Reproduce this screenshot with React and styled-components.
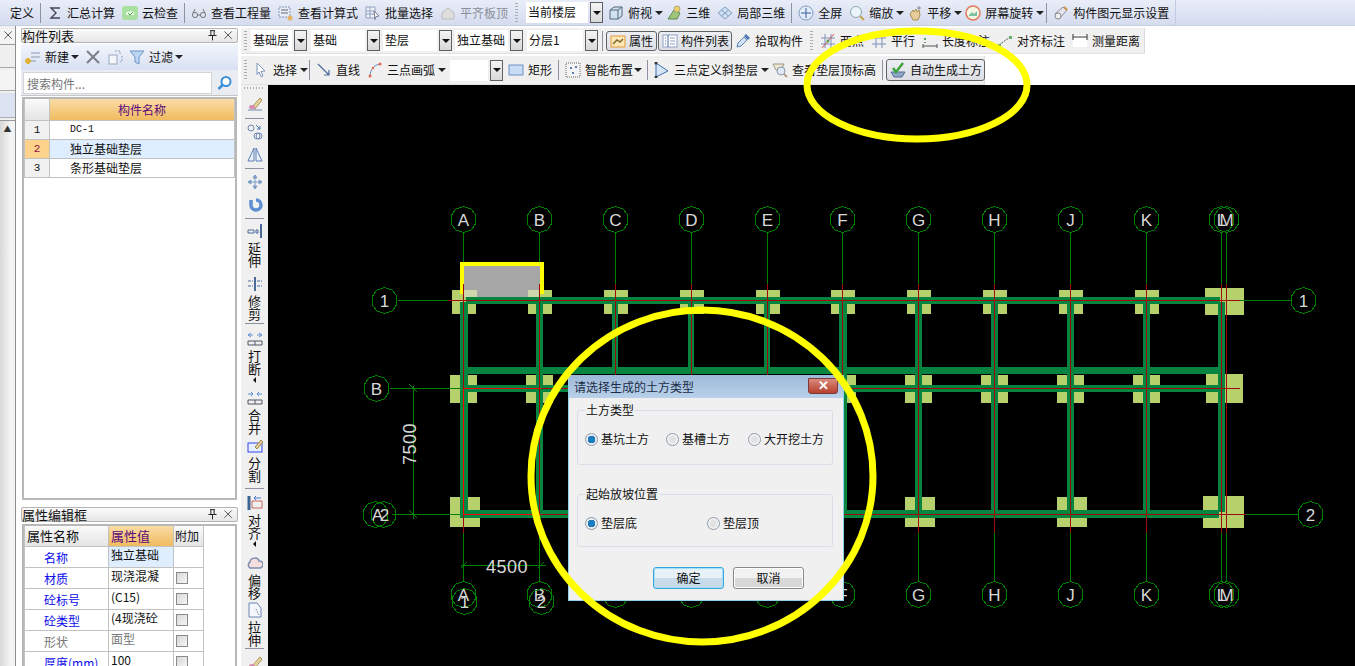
import React from 'react'
import styled, { createGlobalStyle, css } from 'styled-components'

const FONT = `"Noto Sans CJK SC", "Liberation Sans", sans-serif`

const GlobalStyle = createGlobalStyle`
  html, body { margin: 0; padding: 0; background: #fff; overflow: hidden; }
  body { font: 12px/16px ${FONT}; color: #111; }
`

/* ---------- small toolbar icons ---------- */

const G = { fill: 'none', stroke: '#6f86b4', strokeWidth: 1 }

const icons = {
  doc: <><rect x="-8" y="3" width="13" height="11" fill="#dfe7f5" stroke="#5a72a0" /><path d="M-5 6h7M-5 9h7" stroke="#5a72a0" /></>,
  sigma: <path d="M13 3H4l5 5-5 5h9" fill="none" stroke="#445" strokeWidth="1.4" />,
  cloud: <><rect x="0" y="1" width="16" height="14" rx="3" fill="#a9dfa0" /><path d="M4 9c0-3 3-3 4-2 2-2 5 0 4 3H5z" fill="#f4fff0" /><path d="M6 8l2 2 3-3" stroke="#4aa54a" fill="none" /></>,
  glasses: <><circle cx="4" cy="10" r="2.6" {...G} stroke="#777" /><circle cx="12" cy="10" r="2.6" {...G} stroke="#777" /><path d="M6.5 10h3M2 8l2-4M14 8l-2-4" stroke="#777" fill="none" /></>,
  sheet: <><path d="M1 2h11v10H1z" fill="#e8edf6" stroke="#7f93b8" strokeDasharray="2 1" /><path d="M3 5h7M3 8h7" stroke="#667" /><circle cx="12" cy="13" r="2.5" fill="#e5b565" /></>,
  batch: <><path d="M1 2h9v11H1z" fill="#eef1f8" stroke="#8fa0c0" /><path d="M1 6h9M1 9h9M5 2v11" stroke="#8fa0c0" /><path d="M9 6l5 5-3 .5-1 3z" fill="#fff" stroke="#778" /></>,
  house: <path d="M2 8l6-5 6 5v6H2z" fill="#ddd" stroke="#bbb" />,
  cube: <><path d="M2 5l4-3h8v9l-4 3H2z" fill="#cfe3f2" stroke="#567" /><path d="M2 5h8v9M10 5l4-3" fill="none" stroke="#567" /></>,
  threeD: <><path d="M2 14L8 5l6 3-3 6z" fill="#9dc67c" stroke="#5d8a4a" /><circle cx="11" cy="4" r="3" fill="#f0d060" stroke="#aa8" /></>,
  local: <><path d="M1 8l7-6 7 6-7 6z" fill="#cfe0f2" stroke="#7f9cc0" /><path d="M4.5 5l7 6M11.500 5l-7 6" stroke="#7f9cc0" /></>,
  fullscreen: <><circle cx="8" cy="8" r="7" fill="#e3ecf8" stroke="#7f9cc0" /><path d="M8 3v10M3 8h10" stroke="#35609a" /></>,
  zoom: <><circle cx="7" cy="7" r="5.500" fill="#eef4fb" stroke="#8aa" /><path d="M11 11l4 4" stroke="#c9a050" strokeWidth="2" /></>,
  hand: <><path d="M3 9l3-4 1 2 2-3 1 3 2-2 1 5-2 5H6z" fill="#e7cd9a" stroke="#a98d55" /><path d="M12 1v4M10 3h4" stroke="#889" /></>,
  rotate: <><circle cx="8" cy="8" r="7" fill="#f3f6e4" stroke="#e27a5a" strokeWidth="1.5" /><path d="M4 10l3-3 2 2 3-3v5H4z" fill="#7cc0a0" /></>,
  settings: <><path d="M2 9l8-7 4 3-7 8z" fill="#e3e6ee" stroke="#889" /><circle cx="5" cy="11" r="3" fill="#f0f0f0" stroke="#888" /><path d="M11 2l3 3" stroke="#d09040" strokeWidth="2" /></>,
  props: <><rect x="1" y="3" width="14" height="11" fill="#fde6b5" stroke="#e59a3a" /><path d="M3 11l4-4 3 2 3-3" stroke="#7a6a30" fill="none" strokeWidth="1.500" /></>,
  list: <><rect x="1" y="2" width="14" height="12" fill="#fff" stroke="#8ca0c4" /><path d="M6 2v12M3 5h1M3 8h1M3 11h1" stroke="#4a6aa0" /><path d="M8 5h5M8 8h5M8 11h5" stroke="#8ca0c4" /></>,
  dropper: <><path d="M2 14l1-4 6-6 3 3-6 6z" fill="#cfe4f7" stroke="#5a7fb0" /><path d="M9 3l2-2 4 4-2 2z" fill="#4a76b5" /></>,
  twoPoint: <><path d="M1 5h14M1 11h14M5 1v14M11 1v14" stroke="#7d93bb" fill="none" /><path d="M2 15L14 1" stroke="#d9534f" /><circle cx="8" cy="8" r="1.500" fill="#5a9a50" /></>,
  parallel: <path d="M1 5h14M1 11h14M5 1v14M11 1v14" stroke="#7d93bb" fill="none" />,
  dimLen: <><path d="M1 11v4M15 11v4M1 13h14" stroke="#555" fill="none" /><path d="M2 5h2v2H2zM2 9h2v1H2z" fill="#5aa55a" /></>,
  dimAlign: <><path d="M2 12L13 4" stroke="#555" strokeDasharray="2 1" fill="none" /><rect x="1" y="11" width="3" height="3" fill="#6ab06a" /><rect x="12" y="3" width="3" height="3" fill="#6ab06a" /></>,
  measure: <><rect x="1" y="2" width="14" height="12" fill="#fff" /><path d="M1 1v6M15 1v6M1 4h14" stroke="#333" fill="none" /></>,
  cursor: <path d="M4 1l8 8-4 .5 2 4.500-2 .5-2-4.500-2 2.500z" fill="#fff" stroke="#7d93bb" />,
  line: <path d="M2 2l11 11M13 8v5H8" stroke="#4a6a9a" fill="none" strokeWidth="1.200" />,
  arc: <><path d="M3 14C3 8 7 3 13 2" stroke="#6a86b4" fill="none" /><circle cx="3" cy="14" r="1.500" fill="#e06a50" /><circle cx="13" cy="2" r="1.500" fill="#e06a50" /><circle cx="6" cy="6" r="1.200" fill="#e06a50" /></>,
  rect: <rect x="1" y="3" width="14" height="10" fill="#c8dcf5" stroke="#6f8fc0" />,
  smart: <><rect x="1" y="1" width="14" height="14" fill="#f4f4f4" stroke="#666" strokeDasharray="1 1" /><path d="M5 5h2v2H5zM10 4h2v2h-2zM7 10h2v2H7z" fill="#5a7fb0" /></>,
  slope: <><path d="M2 1l12 8-12 6z" fill="#d7e6f7" stroke="#3d6cae" /><circle cx="2" cy="1" r="1.500" fill="#334" /><circle cx="2" cy="15" r="1.500" fill="#334" /></>,
  viewTop: <><path d="M1 2h11l-3 6H4z" fill="#f0e6cf" stroke="#998" /><circle cx="9" cy="9" r="4" fill="#dfeaf6" stroke="#89a" /><path d="M12 12l3 3" stroke="#b98" strokeWidth="2" /></>,
  autoSoil: <><path d="M1 10h14l-3 5H4z" fill="#8fa6c9" stroke="#5a6f96" /><path d="M3 6l3 4 7-9" stroke="#3ea53e" fill="none" strokeWidth="2.500" /></>,
  brush: <><path d="M1 14h14" stroke="#6f86b4" /><path d="M5 11L13 2l2 2-7 9z" fill="#e8d49a" stroke="#a8955a" /><ellipse cx="5" cy="11" rx="3" ry="2" fill="#d58bb0" /></>,
  offsetC: <><circle cx="4" cy="4" r="3" {...G} /><circle cx="10" cy="12" r="3" {...G} /><circle cx="12" cy="12" r="3" {...G} /><path d="M9 1l4 4M13 2v3h-3" stroke="#4a76b5" fill="none" /></>,
  mirror: <><path d="M7 2L1 15h6zM9 2l6 13H9z" fill="#e9f0fa" stroke="#5a7fb5" /></>,
  move: <path d="M8 1v14M1 8h14M8 1L6 4h4zM8 15l-2-3h4zM1 8l3-2v4zM15 8l-3-2v4z" fill="#7d9cc6" stroke="#7d9cc6" />,
  spin: <path d="M4 3v5a5 5 0 1 0 5-5" fill="none" stroke="#5f8fd0" strokeWidth="3.500" />,
  extend: <><path d="M1 7h6v3H1zM9 7h2v3H9z" fill="none" stroke="#4a6a9a" /><path d="M14 1v14" stroke="#4a6a9a" strokeWidth="2" /></>,
  trim: <><path d="M1 5h5M1 10h5M10 5h5M10 10h5" stroke="#4a6a9a" strokeDasharray="3 1" /><path d="M8 1v14" stroke="#4a6a9a" strokeWidth="2" /></>,
  split: <><path d="M1 4h5M15 4h-5M4 2L1 4l3 2M12 2l3 2-3 2" stroke="#5f8fd0" fill="none" /><path d="M1 10h14v4H1zM8 10v4" stroke="#556" fill="none" /></>,
  merge: <><path d="M1 4h5M15 4h-5M4 2l2 2-2 2M12 2l-2 2 2 2" stroke="#5f8fd0" fill="none" /><path d="M1 10h14v4H1zM8 10v4" stroke="#556" fill="none" /></>,
  cut: <><rect x="1" y="5" width="14" height="9" fill="#e6eeff" stroke="#3344ee" /><path d="M8 9l6-7 2 2-6 7z" fill="#e0c990" stroke="#a08a50" /></>,
  align: <><path d="M2 1v14" stroke="#3d6390" strokeWidth="3" /><path d="M5 6h10M5 13h10M5 6v7M15 6v7" stroke="#c66" fill="none" /><path d="M14 3H7l2-2M7 3l2 2" stroke="#4a7ad0" fill="none" /></>,
  offsetCloud: <path d="M3 13a3.500 3.500 0 0 1 0-6c0-4 8-6 9-1a3.500 3.500 0 0 1 1 7z" fill="#f4dede" stroke="#7d8fb0" strokeWidth="1.500" />,
  stretch: <><path d="M2 1h8l4 5v9H2z" fill="#f4f7fc" stroke="#6f86b4" /><path d="M9 7l3 6" stroke="#667" strokeDasharray="1 1" /></>,
  add: <><path d="M6 4h9M6 8h9M6 12h5" stroke="#8a99b5" /><path d="M3 9v6M0 12h6" stroke="#e0b030" strokeWidth="3" /></>,
  del: <path d="M2 2l12 12M14 2L2 14" stroke="#7b7f88" strokeWidth="2" />,
  copy: <><rect x="1" y="6" width="8" height="9" fill="#f4f6fa" stroke="#9aa8c0" /><path d="M7 2h5v3M14 7v5l-2 1" fill="none" stroke="#8ca2c8" strokeDasharray="2 1" /></>,
  filter: <path d="M1 2h14l-5 6v7l-4-2V8z" fill="#bcd6f2" stroke="#6d96c8" />,
  search: <><circle cx="9" cy="6.500" r="4.500" fill="#fff" stroke="#3a8fd8" strokeWidth="2" /><path d="M5.500 10l-4 4" stroke="#3a8fd8" strokeWidth="2.500" /></>,
  pin: <path d="M5 2h6M6 2v6M10 2v6M3 8h10M8 8v6" stroke="#222" fill="none" strokeWidth="1.200" />,
  close: <path d="M3 3l9 9M12 3l-9 9" stroke="#333" fill="none" />,
}

const IconSvg = styled.svg`
  flex: none;
  display: block;
  width: ${(p) => p.$size || 16}px;
  height: ${(p) => p.$size || 16}px;
  overflow: hidden;
`

const Icon = ({ name, size }) => (
  <IconSvg viewBox="0 0 16 16" $size={size}>
    {icons[name]}
  </IconSvg>
)

/* ---------- toolbar parts ---------- */

const TopBar = styled.div`
  display: flex;
  align-items: center;
  height: 25px;
  flex: none;
  background: linear-gradient(#e9edf8, #d5dcef);
  border-bottom: 1px solid #c6cede;
  overflow: hidden;
`

const TopFill = styled.div`
  display: flex;
  align-items: center;
  width: 1175px;
  height: 100%;
  flex: none;
  border-right: 1px solid #c3cbe0;
`

const ToolWrap = styled.div`
  display: flex;
  align-items: center;
  flex: none;
  gap: 4px;
  margin-left: ${(p) => p.$ml || 0}px;
  color: ${(p) => (p.$muted ? '#8a8f99' : '#111')};
  white-space: nowrap;
`

const Tool = ({ icon, label, ml, muted }) => (
  <ToolWrap $ml={ml} $muted={muted}>
    <Icon name={icon} />
    <span>{label}</span>
  </ToolWrap>
)

const Caret = styled.span`
  flex: none;
  width: 0;
  height: 0;
  margin-left: ${(p) => p.$ml ?? 3}px;
  border: 4px solid transparent;
  border-top-color: #222;
  border-bottom: 0;
`

const Sep = styled.span`
  flex: none;
  width: 1px;
  height: ${(p) => p.$h || 20}px;
  margin-left: ${(p) => p.$ml || 0}px;
  background: #8d939e;
`

const Grip = styled.span`
  flex: none;
  width: 3px;
  height: ${(p) => p.$h || 20}px;
  margin-left: ${(p) => p.$ml || 0}px;
  margin-right: 1px;
  background: repeating-linear-gradient(#a9adb5 0 1px, transparent 1px 3px);
`

const SelectField = styled.div`
  flex: none;
  width: ${(p) => p.$w}px;
  height: 21px;
  margin-left: ${(p) => p.$ml || 0}px;
  padding-left: 2px;
  box-sizing: border-box;
  background: #fff;
  line-height: 20px;
  overflow: hidden;
  white-space: nowrap;
`

const SelectArrow = styled.div`
  flex: none;
  width: 13px;
  height: 21px;
  margin-left: 2px;
  box-sizing: border-box;
  display: flex;
  align-items: center;
  justify-content: center;
  border: 1px solid #5d6066;
  background: linear-gradient(#f4f4f4, #d8d8d8);
  &::after {
    content: '';
    border: 4px solid transparent;
    border-top-color: #111;
    border-bottom: 0;
  }
`

const Select = ({ w, ml, value }) => (
  <>
    <SelectField $w={w} $ml={ml}>{value}</SelectField>
    <SelectArrow />
  </>
)

const PressedButton = styled.div`
  flex: none;
  display: flex;
  align-items: center;
  gap: ${(p) => p.$gap || 3}px;
  box-sizing: border-box;
  width: ${(p) => p.$w}px;
  height: ${(p) => p.$h || 20}px;
  margin-left: ${(p) => p.$ml || 0}px;
  padding-left: 3px;
  border: 1px solid #5f6368;
  border-radius: 3px;
  background: linear-gradient(#eceef2, #dcdee3);
`

const Workspace = styled.div`
  flex: 1;
  min-width: 0;
  margin-left: 3px;
  display: flex;
  flex-direction: column;
`

const ToolRow = styled.div`
  display: flex;
  align-items: center;
  flex: none;
  box-sizing: border-box;
  width: ${(p) => p.$w}px;
  height: ${(p) => p.$h}px;
  margin-top: ${(p) => p.$mt || 0}px;
  padding-left: 3px;
  background: #f0f0f0;
  border-right: 1px solid #dcdcdc;
  border-bottom: 1px solid #e2e2e2;
`

/* ---------- left panels ---------- */

const Body = styled.div`
  flex: 1;
  min-height: 0;
  display: flex;
`

const Dock = styled.div`
  flex: none;
  width: 15px;
  display: flex;
  flex-direction: column;
  gap: 2px;
  background: #f0f0f0;
  border-right: 1px solid #8d8d8d;
`

const DockHead = styled.div`
  height: 15px;
  margin-top: 3px;
  display: flex;
  justify-content: flex-end;
  background: #f4f4f4;
  border-bottom: 1px solid #999;
`

const DockTab = styled.div`
  height: ${(p) => p.$h}px;
  background: ${(p) => p.$bg};
  border-bottom: 1px solid #aaa;
`

const DockScroll = styled.div`
  flex: 1;
  background: linear-gradient(90deg, #d8d8d8, #f4f4f4 70%);
  border-top: 1px solid #999;
  color: #333;
  font-size: 8px;
  line-height: 16px;
  text-align: center;
`

const Panels = styled.div`
  flex: none;
  width: 217px;
  margin-left: 5px;
  display: flex;
  flex-direction: column;
`

const PanelTitle = styled.div`
  display: flex;
  align-items: center;
  flex: none;
  box-sizing: border-box;
  height: 15px;
  margin-top: ${(p) => p.$mt || 0}px;
  padding-right: 2px;
  font-size: 13px;
  background: linear-gradient(#fafafa, #e6e6e6);
  border: 1px solid #b4b4b4;
  border-radius: 2px;
  span { flex: 1; }
  svg { margin-left: 3px; }
`

const NewBar = styled.div`
  display: flex;
  align-items: center;
  flex: none;
  height: 26px;
  margin-top: 1px;
  padding-left: 4px;
  background: linear-gradient(#f2f5fc, #d8e0f2);
`

const SearchRow = styled.div`
  display: flex;
  align-items: center;
  flex: none;
  height: 25px;
  background: #e9ecf3;
  border-bottom: 1px solid #c6c6c6;
`

const SearchInput = styled.div`
  flex: none;
  width: 189px;
  height: 22px;
  margin-left: 2px;
  padding-left: 3px;
  box-sizing: border-box;
  line-height: 21px;
  color: #777;
  background: #fff;
  border: 1px solid #d4d4d4;
`

const SearchBtn = styled.div`
  margin-left: 5px;
`

const Frame = styled.div`
  flex: ${(p) => (p.$h ? 'none' : 1)};
  height: ${(p) => (p.$h ? `${p.$h}px` : 'auto')};
  box-sizing: border-box;
  min-height: 0;
  margin-top: ${(p) => p.$mt || 0}px;
  margin-left: 1px;
  margin-right: 1px;
  background: #fff;
  border: 2px solid #b8b8b8;
  border-bottom-width: ${(p) => (p.$h ? 0 : 2)}px;
  overflow: hidden;
`

const Grid = styled.table`
  border-collapse: collapse;
  table-layout: fixed;
  width: ${(p) => p.$w}px;
`

const headerCell = css`
  background: linear-gradient(#f9dca6, #f0bb5f);
  color: #5c0a7c;
`

const Th = styled.th`
  height: ${(p) => p.$h}px;
  padding: 0 0 0 ${(p) => p.$pad || 0}px;
  font-weight: 400;
  font-size: ${(p) => p.$fs || 12}px;
  text-align: ${(p) => (p.$center ? 'center' : 'left')};
  border: 1px solid #c2c2c2;
  border-top: 0;
  background: linear-gradient(#fafafa, #e4e4e4);
  ${(p) => p.$active && headerCell}
`

const IndexCell = styled.td`
  height: 18px;
  padding: 0;
  font: 11px/18px "Liberation Mono", monospace;
  text-align: center;
  border: 1px solid #c2c2c2;
  background: ${(p) => (p.$on ? '#fdd38c' : '#f1f1f1')};
  color: ${(p) => (p.$on ? '#8a1040' : '#111')};
`

const NameCell = styled.td`
  height: 18px;
  padding: 0 0 0 20px;
  line-height: 16px;
  border: 1px solid #c2c2c2;
  background: ${(p) => (p.$on ? '#dfeeff' : '#fff')};
  font-family: ${(p) => (p.$code ? '"Liberation Mono", monospace' : 'inherit')};
  font-size: ${(p) => (p.$code ? 10 : 12)}px;
`

const PropName = styled.td`
  height: 20px;
  padding: 0 0 0 19px;
  border: 1px solid #c2c2c2;
  color: ${(p) => (p.$off ? '#777' : '#0a0af0')};
  line-height: 15px;
  white-space: nowrap;
  overflow: hidden;
`

const PropValue = styled.td`
  height: 20px;
  padding: 0 0 0 2px;
  vertical-align: top;
  border: 1px solid #c2c2c2;
  color: ${(p) => (p.$off ? '#777' : '#111')};
  background: ${(p) => (p.$on ? '#dfeeff' : '#fff')};
  line-height: 15px;
  overflow: hidden;
  white-space: nowrap;
`

const PropCheck = styled.td`
  padding: 0 0 0 2px;
  border: 1px solid #c2c2c2;
`

const CheckBox = styled.div`
  width: 10px;
  height: 10px;
  background: linear-gradient(135deg, #d8d8d8, #f6f6f6);
  border: 1px solid #8a8a8a;
`

/* ---------- vertical tool strip + canvas ---------- */

const Stage = styled.div`
  flex: 1;
  min-height: 0;
  display: flex;
`

const Strip = styled.div`
  flex: none;
  width: 27px;
  display: flex;
  flex-direction: column;
  align-items: center;
  background: #f0f0f0;
  overflow: hidden;
`

const StripGrip = styled.div`
  flex: none;
  width: 21px;
  height: 2px;
  margin-top: 2px;
  background: repeating-linear-gradient(90deg, #a9adb5 0 1px, transparent 1px 3px);
`

const StripLine = styled.div`
  flex: none;
  width: 19px;
  height: 1px;
  margin-top: ${(p) => p.$mt}px;
  background: #8d939e;
`

const StripTool = styled.div`
  flex: none;
  width: 14px;
  display: flex;
  flex-direction: column;
  align-items: center;
  margin-top: ${(p) => p.$mt}px;
`

const StripLabel = styled.div`
  width: 13px;
  margin-top: 2px;
  font-size: 13px;
  line-height: 13px;
  text-align: center;
`

const StripCaret = styled.div`
  width: 0;
  height: 0;
  margin-top: 2px;
  border: 3px solid transparent;
  border-right-color: #111;
  border-left: 0;
`

const Canvas = styled.svg`
  flex: 1;
  min-width: 0;
  display: block;
  height: 100%;
  background: #000;
`

/* ---------- dialog ---------- */

const Dialog = styled.div`
  position: absolute;
  left: 568px;
  top: 375px;
  width: 276px;
  height: 226px;
  box-sizing: border-box;
  display: flex;
  flex-direction: column;
  background: #f0f0f0;
  border: 1px solid #8fd0ea;
  border-top: 0;
`

const DialogTitle = styled.div`
  flex: none;
  height: 23px;
  display: flex;
  align-items: center;
  justify-content: space-between;
  padding: 0 5px;
  color: #1c2c48;
  background: linear-gradient(#9db9d8, #b9d1ea);
`

const CloseButton = styled.div`
  width: 30px;
  height: 16px;
  margin-top: -2px;
  box-sizing: border-box;
  display: flex;
  align-items: center;
  justify-content: center;
  color: #fff;
  font: 700 13px/14px "Liberation Sans", sans-serif;
  border: 1px solid #7a3a3a;
  border-radius: 0 0 3px 3px;
  background: linear-gradient(#d98a7c, #b8402f);
`

const Group = styled.fieldset`
  flex: none;
  box-sizing: border-box;
  width: 256px;
  height: ${(p) => p.$h}px;
  margin: ${(p) => p.$mt}px 0 0 8px;
  padding: 0;
  border: 1px solid #d7dee8;
  border-radius: 3px;
`

const Legend = styled.legend`
  margin-left: 7px;
  padding: 0 1px;
  line-height: 14px;
`

const RadioRow = styled.div`
  display: flex;
  align-items: center;
  margin-top: ${(p) => p.$mt}px;
  padding-left: 7px;
`

const RadioItem = styled.label`
  display: flex;
  align-items: center;
  gap: 3px;
  width: ${(p) => p.$w}px;
  flex: none;
`

const RadioDot = styled.span`
  flex: none;
  width: 11px;
  height: 11px;
  border-radius: 50%;
  border: 1px solid #8d9aa8;
  background: ${(p) =>
    p.$on
      ? 'radial-gradient(circle, #1b7fc4 0 3px, #0e5b94 3.500px, #e8eef4 4px)'
      : 'radial-gradient(circle, #e2e2e2 0 3px, #f5f5f5 5px)'};
`

const Actions = styled.div`
  display: flex;
  gap: 9px;
  margin: 20px 0 0 84px;
`

const DialogButton = styled.div`
  width: 71px;
  height: 22px;
  box-sizing: border-box;
  line-height: 20px;
  text-align: center;
  border-radius: 3px;
  border: ${(p) => (p.$primary ? '1px solid #35a6dc' : '1px solid #8a8a8a')};
  box-shadow: ${(p) => (p.$primary ? 'inset 0 0 0 1px #a5e0f5' : 'inset 0 0 0 1px #fff')};
  background: ${(p) =>
    p.$primary ? 'linear-gradient(#e8f1f8 50%, #c8dbe8 50%)' : 'linear-gradient(#f2f2f2 50%, #d8d8d8 50%)'};
`

const Page = styled.div`
  position: relative;
  width: 1355px;
  height: 666px;
  display: flex;
  flex-direction: column;
  overflow: hidden;
  background: #fff;
`

const Annotations = styled.svg`
  position: absolute;
  left: 0;
  top: 0;
  pointer-events: none;
`

/* ---------- CAD drawing ---------- */

const AXIS = '#008000'
const BEAM = '#07843f'
const PAD = '#b6d16c'
const DARK_RED = '#a00808'
const LABEL = '#d8d8d8'

const columns = [
  ['A', 463], ['B', 539], ['C', 615], ['D', 691], ['E', 767], ['F', 842],
  ['G', 918], ['H', 994], ['J', 1070], ['K', 1146], ['L', 1221], ['M', 1226],
]

const mainCols = columns.slice(0, 10).map(([, x]) => x)

const ringPoints = (cx, cy, r) =>
  Array.from({ length: 10 }, (_, i) => {
    const a = (Math.PI * 2 * i) / 10 + 0.3
    return `${(cx + r * Math.cos(a)).toFixed(1)},${(cy + r * Math.sin(a)).toFixed(1)}`
  }).join(' ')

const Bubble = ({ x, y, text, tx }) => (
  <g>
    <polygon points={ringPoints(x, y, 13)} fill="none" stroke={AXIS} />
    <text
      x={tx ?? x}
      y={y + 6}
      fill={LABEL}
      fontFamily="Liberation Sans, sans-serif"
      fontSize="17"
      textAnchor="middle"
    >
      {text}
    </text>
  </g>
)

const Bar = ({ x, y, w, h, fill }) => <rect x={x} y={y} width={w} height={h} fill={fill} />

const pads = [
  ...mainCols.map((x) => [x - 11, 290, 24, 24]),
  [1205, 288, 39, 27],
  ...mainCols.map((x) => [x - 13, 375, 27, 28]),
  [1206, 374, 37, 29],
  ...[463, 691, 918, 1070].map((x) => [x - 13, 497, 30, 30]),
  [1203, 496, 41, 32],
]

const Drawing = () => (
  <Canvas viewBox="268 85 1087 581" shapeRendering="crispEdges">
    {pads.map(([x, y, w, h], i) => (
      <Bar key={i} x={x} y={y} w={w} h={h} fill={PAD} />
    ))}

    <g transform="translate(.5 .5)">
      {columns.map(([, x]) => (
        <line key={x} x1={x} x2={x} y1="232" y2="581" stroke={AXIS} />
      ))}
      <line x1="397" x2="1290" y1="300" y2="300" stroke={AXIS} />
      <line x1="389" x2="1239" y1="388" y2="388" stroke={AXIS} />
      <line x1="391" x2="1297" y1="514" y2="514" stroke={AXIS} />
    </g>

    <Bar x={464} y={266} w={76} h={31} fill="#a6a6a6" />
    <Bar x={464} y={290} w={13} h={7} fill="#ced6ac" />
    <Bar x={528} y={290} w={12} h={7} fill="#ced6ac" />
    <path d="M462 294V264H542V294" fill="none" stroke="#ffff00" strokeWidth="4" />

    <Bar x={466} y={297} w={754} h={7} fill={BEAM} />
    <Bar x={468} y={367} w={750} h={7} fill={BEAM} />
    <Bar x={468} y={385} w={750} h={7} fill={BEAM} />
    <Bar x={466} y={510} w={753} h={8} fill={BEAM} />
    <Bar x={460} y={302} w={8} h={216} fill={BEAM} />
    <Bar x={536} y={302} w={7} h={212} fill={BEAM} />
    {columns.slice(2, 5).map(([, x]) => (
      <Bar key={x} x={x - 3} y={302} w={6} h={66} fill={BEAM} />
    ))}
    <Bar x={839} y={302} w={8} h={212} fill={BEAM} />
    {columns.slice(6, 10).map(([, x]) => (
      <Bar key={x} x={x - 3} y={302} w={7} h={212} fill={BEAM} />
    ))}
    <Bar x={1218} y={302} w={7} h={210} fill={BEAM} />

    <g transform="translate(.5 .5)">
      <line x1="447" x2="1239" y1="300" y2="300" stroke={DARK_RED} />
      <line x1="540" x2="1239" y1="388" y2="388" stroke={DARK_RED} />
      <line x1="463" x2="540" y1="388" y2="388" stroke="#ff0000" />
      <line x1="540" x2="1245" y1="514" y2="514" stroke={DARK_RED} />
      <line x1="463" x2="540" y1="514" y2="514" stroke="#ff0000" />
      {columns.map(([, x]) => (
        <line key={x} x1={x} x2={x} y1="283" y2="532" stroke={DARK_RED} />
      ))}
      <line x1="463" x2="463" y1="388" y2="514" stroke="#ff0000" />

      {columns.map(([name, x]) => (
        <Bubble key={name} x={x} y={219} text={name} />
      ))}
      {columns.map(([name, x]) => (
        <Bubble key={name} x={x} y={594} text={name} />
      ))}
      <Bubble x={464} y={601} text="1" />
      <Bubble x={541} y={601} text="2" />
      <Bubble x={384} y={300} text="1" />
      <Bubble x={376} y={388} text="B" />
      <Bubble x={375} y={514} text="A" tx={377} />
      <Bubble x={383} y={514} text="2" tx={384} />
      <Bubble x={1303} y={300} text="1" />
      <Bubble x={1310} y={514} text="2" />

      <line x1="413" x2="413" y1="385" y2="518" stroke={AXIS} />
      <path d="M409 384l8 8M409 510l8 8" stroke={AXIS} />
      <line x1="460" x2="545" y1="565" y2="565" stroke={AXIS} />
      <path d="M460 568l6-6M537 568l6-6" stroke={AXIS} />
    </g>
    <text
      x="507"
      y="573"
      fill={LABEL}
      fontFamily="Liberation Sans, sans-serif"
      fontSize="18"
      textAnchor="middle"
      letterSpacing="0.500"
    >
      4500
    </text>
    <text
      transform="translate(416 444) rotate(-90)"
      fill={LABEL}
      fontFamily="Liberation Sans, sans-serif"
      fontSize="18"
      textAnchor="middle"
      letterSpacing="0.500"
    >
      7500
    </text>
  </Canvas>
)

/* ---------- data for the small tables ---------- */

const parts = [
  { id: 1, name: 'DC-1', code: true },
  { id: 2, name: '独立基础垫层', on: true },
  { id: 3, name: '条形基础垫层' },
]

const props = [
  { name: '名称', value: '独立基础', on: true, noCheck: true },
  { name: '材质', value: '现浇混凝' },
  { name: '砼标号', value: ' (C15)' },
  { name: '砼类型', value: ' (4现浇砼' },
  { name: '形状', value: '面型', off: true },
  { name: '厚度(mm)', value: '100' },
]

const stripTools = [
  { type: 'tool', icon: 'brush', mt: 7 },
  { type: 'line', mt: 6 },
  { type: 'tool', icon: 'offsetC', mt: 5 },
  { type: 'tool', icon: 'mirror', mt: 6 },
  { type: 'line', mt: 6 },
  { type: 'tool', icon: 'move', mt: 5 },
  { type: 'tool', icon: 'spin', mt: 7 },
  { type: 'line', mt: 5 },
  { type: 'tool', icon: 'extend', mt: 4, label: '延伸' },
  { type: 'tool', icon: 'trim', mt: 9, label: '修剪' },
  { type: 'line', mt: 3 },
  { type: 'tool', icon: 'split', mt: 7, label: '打断', caret: true },
  { type: 'tool', icon: 'merge', mt: 7, label: '合并' },
  { type: 'tool', icon: 'cut', mt: 4, label: '分割' },
  { type: 'line', mt: 6 },
  { type: 'tool', icon: 'align', mt: 6, label: '对齐', caret: true },
  { type: 'tool', icon: 'offsetCloud', mt: 8, label: '偏移' },
  { type: 'tool', icon: 'stretch', mt: 3, label: '拉伸' },
  { type: 'line', mt: 2 },
  { type: 'tool', icon: 'brush', mt: 6 },
]

export default function App() {
  return (
    <Page>
      <GlobalStyle />

      <TopBar>
        <TopFill>
          <Tool icon="doc" label="定义" ml={-10} />
          <Sep $ml={6} />
          <Tool icon="sigma" label="汇总计算" ml={6} />
          <Tool icon="cloud" label="云检查" ml={7} />
          <Sep $ml={6} />
          <Tool icon="glasses" label="查看工程量" ml={6} />
          <Tool icon="sheet" label="查看计算式" ml={7} />
          <Tool icon="batch" label="批量选择" ml={7} />
          <Tool icon="house" label="平齐板顶" ml={7} muted />
          <Grip $ml={7} />
          <Select w={62} ml={7} value="当前楼层" />
          <Tool icon="cube" label="俯视" ml={5} />
          <Caret />
          <Tool icon="threeD" label="三维" ml={3} />
          <Tool icon="local" label="局部三维" ml={7} />
          <Sep $ml={6} />
          <Tool icon="fullscreen" label="全屏" ml={6} />
          <Tool icon="zoom" label="缩放" ml={7} />
          <Caret />
          <Tool icon="hand" label="平移" ml={3} />
          <Caret />
          <Tool icon="rotate" label="屏幕旋转" ml={3} />
          <Caret />
          <Sep $ml={2} />
          <Tool icon="settings" label="构件图元显示设置" ml={6} />
        </TopFill>
      </TopBar>

      <Body>
        <Dock>
          <DockHead><Icon name="close" size={13} /></DockHead>
          <DockTab $h={20} $bg="#efefef" />
          <DockTab $h={20} $bg="#f4f4f4" />
          <DockTab $h={24} $bg="#dce4f4" />
          <DockScroll>▲</DockScroll>
        </Dock>

        <Panels>
          <PanelTitle $mt={2}>
            <span>构件列表</span>
            <Icon name="pin" size={13} />
            <Icon name="close" size={13} />
          </PanelTitle>
          <NewBar>
            <Tool icon="add" label="新建" />
            <Caret $ml={2} />
            <ToolWrap $ml={6}><Icon name="del" /></ToolWrap>
            <ToolWrap $ml={7}><Icon name="copy" /></ToolWrap>
            <Tool icon="filter" label="过滤" ml={5} />
            <Caret $ml={2} />
          </NewBar>
          <SearchRow>
            <SearchInput>搜索构件...</SearchInput>
            <SearchBtn><Icon name="search" /></SearchBtn>
          </SearchRow>
          <Frame $mt={1}>
            <Grid $w={211}>
              <colgroup>
                <col width="25" />
                <col />
              </colgroup>
              <thead>
                <tr>
                  <Th $h={21} />
                  <Th $h={21} $active $center>构件名称</Th>
                </tr>
              </thead>
              <tbody>
                {parts.map((part) => (
                  <tr key={part.id}>
                    <IndexCell $on={part.on}>{part.id}</IndexCell>
                    <NameCell $on={part.on} $code={part.code}>{part.name}</NameCell>
                  </tr>
                ))}
              </tbody>
            </Grid>
          </Frame>

          <PanelTitle $mt={7}>
            <span>属性编辑框</span>
            <Icon name="pin" size={13} />
            <Icon name="close" size={13} />
          </PanelTitle>
          <Frame $mt={2} $h={142}>
            <Grid $w={179}>
              <colgroup>
                <col width="84" />
                <col width="65" />
                <col width="30" />
              </colgroup>
              <thead>
                <tr>
                  <Th $h={20} $pad={2} $fs={13}>属性名称</Th>
                  <Th $h={20} $active $pad={2} $fs={13}>属性值</Th>
                  <Th $h={20} $pad={1} $fs={12}>附加</Th>
                </tr>
              </thead>
              <tbody>
                {props.map((prop) => (
                  <tr key={prop.name}>
                    <PropName $off={prop.off}>{prop.name}</PropName>
                    <PropValue $on={prop.on} $off={prop.off}>{prop.value}</PropValue>
                    <PropCheck>{!prop.noCheck && <CheckBox />}</PropCheck>
                  </tr>
                ))}
              </tbody>
            </Grid>
          </Frame>
        </Panels>

        <Workspace>
          <ToolRow $w={904} $h={26} $mt={2}>
            <Grip />
            <Select w={41} ml={3} value="基础层" />
            <Select w={54} ml={4} value="基础" />
            <Select w={54} ml={3} value="垫层" />
            <Select w={53} ml={3} value="独立基础" />
            <Select w={56} ml={4} value="分层1" />
            <Sep $ml={4} />
            <PressedButton $w={51} $ml={3}>
              <Icon name="props" />
              <span>属性</span>
            </PressedButton>
            <PressedButton $w={74} $ml={1}>
              <Icon name="list" />
              <span>构件列表</span>
            </PressedButton>
            <Tool icon="dropper" label="拾取构件" ml={3} />
            <Grip $ml={7} />
            <Tool icon="twoPoint" label="两点" ml={6} />
            <Tool icon="parallel" label="平行" ml={7} />
            <Tool icon="dimLen" label="长度标注" ml={7} />
            <Tool icon="dimAlign" label="对齐标注" ml={7} />
            <Tool icon="measure" label="测量距离" ml={7} />
          </ToolRow>

          <ToolRow $w={744} $h={29} $mt={2}>
            <Grip />
            <Tool icon="cursor" label="选择" ml={5} />
            <Caret />
            <Sep $ml={1} />
            <Tool icon="line" label="直线" ml={6} />
            <Tool icon="arc" label="三点画弧" ml={7} />
            <Caret />
            <Select w={38} ml={4} value="" />
            <Tool icon="rect" label="矩形" ml={5} />
            <Sep $ml={6} />
            <Tool icon="smart" label="智能布置" ml={6} />
            <Caret $ml={1} />
            <Sep $ml={5} />
            <Tool icon="slope" label="三点定义斜垫层" ml={6} />
            <Caret />
            <Tool icon="viewTop" label="查看垫层顶标高" ml={3} />
            <Sep $ml={6} />
            <PressedButton $w={99} $h={22} $ml={3} $gap={4}>
              <Icon name="autoSoil" />
              <span>自动生成土方</span>
            </PressedButton>
          </ToolRow>

          <Stage>
            <Strip>
              <StripGrip />
              {stripTools.map((item, i) =>
                item.type === 'line' ? (
                  <StripLine key={i} $mt={item.mt} />
                ) : (
                  <StripTool key={i} $mt={item.mt}>
                    <Icon name={item.icon} />
                    {item.label && <StripLabel>{item.label}</StripLabel>}
                    {item.caret && <StripCaret />}
                  </StripTool>
                )
              )}
            </Strip>
            <Drawing />
          </Stage>
        </Workspace>
      </Body>

      <Dialog>
        <DialogTitle>
          <span>请选择生成的土方类型</span>
          <CloseButton>✕</CloseButton>
        </DialogTitle>
        <Group $h={62} $mt={5}>
          <Legend>土方类型</Legend>
          <RadioRow $mt={14}>
            <RadioItem $w={81}><RadioDot $on />基坑土方</RadioItem>
            <RadioItem $w={82}><RadioDot />基槽土方</RadioItem>
            <RadioItem $w={80}><RadioDot />大开挖土方</RadioItem>
          </RadioRow>
        </Group>
        <Group $h={60} $mt={22}>
          <Legend>起始放坡位置</Legend>
          <RadioRow $mt={14}>
            <RadioItem $w={122}><RadioDot $on />垫层底</RadioItem>
            <RadioItem $w={80}><RadioDot />垫层顶</RadioItem>
          </RadioRow>
        </Group>
        <Actions>
          <DialogButton $primary>确定</DialogButton>
          <DialogButton>取消</DialogButton>
        </Actions>
      </Dialog>

      <Annotations width="1355" height="666" viewBox="0 0 1355 666">
        <ellipse cx="917" cy="85" rx="110" ry="54" fill="none" stroke="#ffff00" strokeWidth="7" />
        <ellipse cx="702" cy="476" rx="171" ry="166" fill="none" stroke="#ffff00" strokeWidth="7" />
      </Annotations>
    </Page>
  )
}
